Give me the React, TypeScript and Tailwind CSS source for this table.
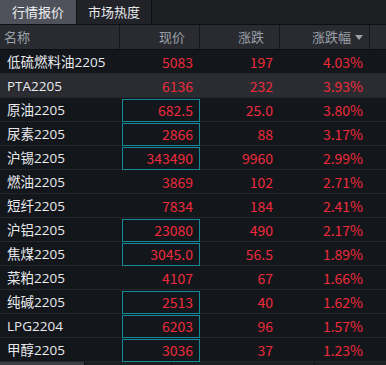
import React from 'react';

type Row = { name: string; price: string; chg: string; pct: string; boxed?: boolean; active?: boolean };

const rows: Row[] = [
    { name: '低硫燃料油2205', price: '5083', chg: '197', pct: '4.03%' },
    { name: 'PTA2205', price: '6136', chg: '232', pct: '3.93%', active: true },
    { name: '原油2205', price: '682.5', chg: '25.0', pct: '3.80%', boxed: true },
    { name: '尿素2205', price: '2866', chg: '88', pct: '3.17%', boxed: true },
    { name: '沪锡2205', price: '343490', chg: '9960', pct: '2.99%', boxed: true },
    { name: '燃油2205', price: '3869', chg: '102', pct: '2.71%' },
    { name: '短纤2205', price: '7834', chg: '184', pct: '2.41%' },
    { name: '沪铝2205', price: '23080', chg: '490', pct: '2.17%', boxed: true },
    { name: '焦煤2205', price: '3045.0', chg: '56.5', pct: '1.89%', boxed: true },
    { name: '菜粕2205', price: '4107', chg: '67', pct: '1.66%' },
    { name: '纯碱2205', price: '2513', chg: '40', pct: '1.62%', boxed: true },
    { name: 'LPG2204', price: '6203', chg: '96', pct: '1.57%', boxed: true },
    { name: '甲醇2205', price: '3036', chg: '37', pct: '1.23%', boxed: true },
];

const App = () => {
    return (
        <div
            className="w-[386px] h-[365px] overflow-hidden bg-[#13161b] text-[14px]"
            style={{ fontFamily: '"Noto Sans CJK SC", "Noto Sans", sans-serif' }}
        >
            {/* tabs */}
            <div className="flex h-[25px] bg-[#1d1e22] border-b border-[#0e0f12]">
                <div className="w-[76px] flex items-center justify-center bg-[#4f515b] text-[#eef0f4] text-[13px]">行情报价</div>
                <div className="w-[76px] flex items-center justify-center bg-[#222328] text-[#e6e8ec] text-[13px] border-l border-r border-[#0e0f12]">市场热度</div>
            </div>

            {/* header */}
            <div className="grid grid-cols-[120px_80px_80px_90px_16px] h-[25px] bg-[#2a2b30] text-[#9ba1aa] text-[13px] border-b border-[#0e0f12]">
                <div className="flex items-center pl-[4px] border-r border-[#15161a]">名称</div>
                <div className="flex items-center justify-end pr-[14px] border-r border-[#15161a]">现价</div>
                <div className="flex items-center justify-end pr-[15px] border-r border-[#15161a]">涨跌</div>
                <div className="flex items-center justify-end pr-[6px] border-r border-[#15161a] gap-[4px]">
                    涨跌幅
                    <svg width="8" height="5" viewBox="0 0 8 5"><path d="M0 0H8L4 5Z" fill="#9ba1aa" /></svg>
                </div>
                <div />
            </div>

            {rows.map((r) => (
                <div
                    key={r.name}
                    className={
                        'grid grid-cols-[120px_80px_80px_90px_16px] h-[24px] border-b border-[#23262b] ' +
                        (r.active ? 'bg-[#2b2c31]' : 'bg-[#13161b]')
                    }
                >
                    <div
                        className="flex items-center pl-[7px] text-[#e8eaee] text-[13.5px]"
                        style={{ fontFamily: '"Open Sans", "Noto Sans CJK SC", sans-serif' }}
                    >
                        {r.name}
                    </div>
                    <div className="flex items-center py-[1px] pl-[2px]">
                        <div
                            className={
                                'flex-1 h-full flex items-center justify-end pr-[6px] text-[#ee2b3c] border ' +
                                (r.boxed ? 'border-[#168a98]' : 'border-transparent')
                            }
                        >
                            {r.price}
                        </div>
                    </div>
                    <div className="flex items-center justify-end pr-[7px] text-[#ee2b3c]">{r.chg}</div>
                    <div className="flex items-center justify-end pr-[7px] text-[#ee2b3c]">{r.pct}</div>
                    <div />
                </div>
            ))}

            <div className="flex h-[4px] bg-[#1d1e22]">
                <div className="w-[85px] bg-[#3b3c42] border-r border-[#0e0f12]" />
                <div className="w-[87px] border-r border-[#0e0f12]" />
                <div className="w-[143px] border-r border-[#0e0f12]" />
            </div>
        </div>
    );
};

export default App;
